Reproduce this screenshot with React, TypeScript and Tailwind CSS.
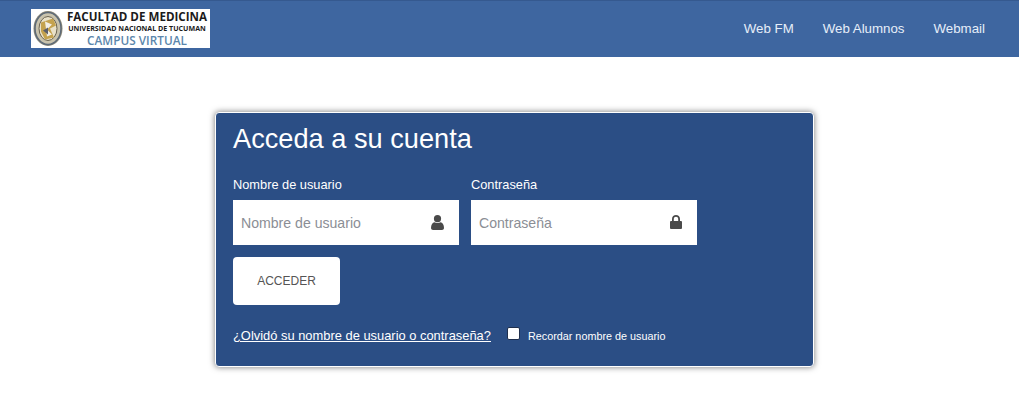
const sans = "font-['Liberation_Sans',Arial,sans-serif]";

function Seal() {
  return (
    <svg width="30" height="37" viewBox="0 0 30 36" className="shrink-0">
      <ellipse cx="15" cy="18" rx="14.5" ry="17.5" fill="#8f8a78" />
      <ellipse cx="15" cy="18" rx="13" ry="16" fill="#c9c3ad" stroke="#5d6a78" strokeWidth="1.5" />
      <ellipse cx="15" cy="18" rx="9" ry="12" fill="#e9e1c8" stroke="#6b6350" strokeWidth="1" />
      <path d="M8 12 L20 8 L23 15 L17 18 L21 27 L12 29 L8 21 Z" fill="#c4a24e" />
      <path d="M12 11 L19 14 L14 19 L19 24 L14 26 Z" fill="#f2efe6" />
      <path d="M10 20 L15 17 L15 24 Z" fill="#5c5f6b" />
    </svg>
  );
}

function Logo() {
  return (
    <div className="mt-[8px] ml-[31px] flex h-[39px] w-[179px] items-center bg-white pl-[2px]">
      <Seal />
      <div className="ml-[4px] flex flex-col items-center font-['Open_Sans',sans-serif]">
        <span className="text-[11.6px] leading-[13px] font-bold whitespace-nowrap text-[#1b1b1b]">FACULTAD DE MEDICINA</span>
        <span className="text-[7.1px] leading-[10px] font-bold whitespace-nowrap text-[#1b1b1b]">UNIVERSIDAD NACIONAL DE TUCUMAN</span>
        <span className="text-[11.8px] leading-[14px] font-semibold whitespace-nowrap text-[#5b86ab]">CAMPUS VIRTUAL</span>
      </div>
    </div>
  );
}

function UserIcon() {
  return (
    <svg width="13" height="15" viewBox="0 0 13 15" fill="#4a4a4a" className="mb-[1px]">
      <circle cx="6.5" cy="3.7" r="3.6" />
      <path d="M0 13 C0 9.5 1.5 7.5 3.5 7.2 C5 8.3 8 8.3 9.5 7.2 C11.5 7.5 13 9.5 13 13 C13 14.2 12 15 11 15 L2 15 C1 15 0 14.2 0 13 Z" />
    </svg>
  );
}

function LockIcon() {
  return (
    <svg width="12" height="14" viewBox="0 0 12 14" fill="#4a4a4a" className="mb-[2px]">
      <path d="M2 6 V4 C2 1.6 3.8 0 6 0 C8.2 0 10 1.6 10 4 V6 H8.2 V4 C8.2 2.7 7.2 1.8 6 1.8 C4.8 1.8 3.8 2.7 3.8 4 V6 Z" />
      <rect x="0" y="6" width="12" height="8" rx="1" />
    </svg>
  );
}

function Field({ label, icon }: { label: string; icon: React.ReactNode }) {
  return (
    <div className="w-[226px]">
      <label className="block h-[27px] pt-[3px] text-[12.8px] leading-[18px] text-white">{label}</label>
      <div className="flex h-[45px] items-center justify-between bg-white pr-[15px] pl-[8px]">
        <span className="text-[14.1px] leading-[20px] text-[#8b8e95]">{label}</span>
        {icon}
      </div>
    </div>
  );
}

export default function App() {
  return (
    <div className={`h-[400px] overflow-hidden bg-white ${sans}`}>
      <header className="flex h-[57px] items-start justify-between border-t border-[#35598f] bg-[#3e66a0]">
        <Logo />
        <nav className="mt-[20px] mr-[34px] flex gap-[29px] text-[13.3px] leading-[16px] text-[#e6eef9]">
          <a>Web FM</a>
          <a>Web Alumnos</a>
          <a>Webmail</a>
        </nav>
      </header>

      <main className="pt-[55px] pl-[215px]">
        <div className="h-[255px] w-[599px] rounded-[4px] border-[1px] border-white bg-[#2b4e85] pr-[16px] pl-[17px] shadow-[0_0_6px_rgba(0,0,0,0.55)]">
          <h1 className="pt-[10px] text-[27.2px] leading-[32px] text-white">Acceda a su cuenta</h1>
          <div className="mt-[18px] flex gap-[12px]">
            <Field label="Nombre de usuario" icon={<UserIcon />} />
            <Field label="Contraseña" icon={<LockIcon />} />
          </div>
          <button className="mt-[12px] block h-[48px] w-[107px] rounded-[4px] bg-white text-[12px] text-[#555]">ACCEDER</button>
          <div className="mt-[22px] flex items-center">
            <a className="text-[12.9px] leading-[18px] text-white underline">¿Olvidó su nombre de usuario o contraseña?</a>
            <span className="mb-[5px] ml-[16px] h-[13px] w-[13px] rounded-[2px] border border-[#1f2f4d] bg-white" />
            <span className="ml-[8px] text-[10.8px] leading-[14px] text-white">Recordar nombre de usuario</span>
          </div>
        </div>
      </main>
    </div>
  );
}
